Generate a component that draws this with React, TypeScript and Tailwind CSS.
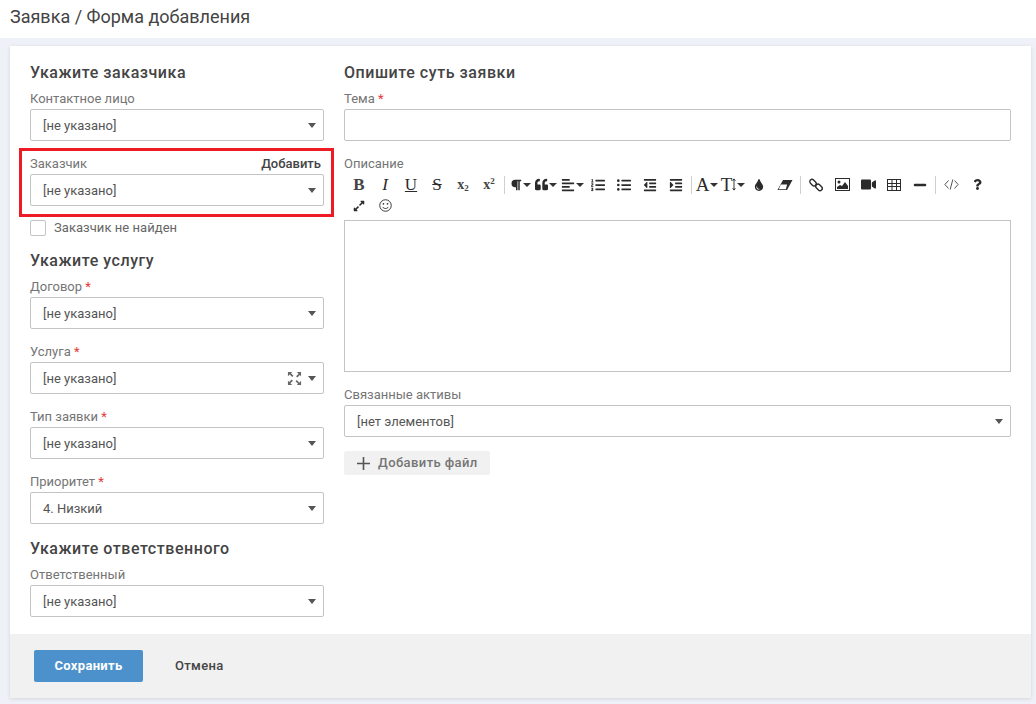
import React from "react";
import { FaParagraph, FaQuoteLeft, FaAlignLeft, FaListOl, FaListUl, FaOutdent, FaIndent, FaTint, FaVideo, FaMinus, FaQuestion, FaExpandAlt } from "react-icons/fa";

const Caret = () => <span className="ml-px inline-block h-0 w-0 shrink-0 border-x-[4px] border-t-[4px] border-x-transparent border-t-[#333]" />;

const Select = ({ value, extra, noCaret }: { value: string; extra?: React.ReactNode; noCaret?: boolean }) => (
  <div className="flex h-[32px] items-center rounded-[2px] border border-[#c4c4c4] bg-white pl-[12px] pr-[7px] text-[13px] text-[#555]">
    <span className="flex-1 pt-[2px]">{value}</span>
    {extra}
    {!noCaret && <span className="h-0 w-0 border-x-[4.5px] border-t-[5px] border-x-transparent border-t-[#555]" />}
  </div>
);

const Field = ({ label, req, value, extra, right, noCaret, className = "" }: { label: string; req?: boolean; value: string; extra?: React.ReactNode; right?: React.ReactNode; noCaret?: boolean; className?: string }) => (
  <div className={className}>
    <div className="flex h-[20px] items-center justify-between text-[13px] text-[#757575]">
      <span>{label}{req && <span className="text-[#e53935]"> *</span>}</span>
      {right}
    </div>
    <Select value={value} extra={extra} noCaret={noCaret} />
  </div>
);

const Heading = ({ children, className = "" }: { children: React.ReactNode; className?: string }) => (
  <div className={`text-[16px] font-medium leading-[20px] tracking-[0.55px] text-[#444] ${className}`}>{children}</div>
);

const Btn = ({ children }: { children: React.ReactNode }) => (
  <span className="flex h-[21px] w-[26px] shrink-0 items-center justify-center text-[#2b2b2b]">{children}</span>
);
const Sep = () => (
  <span className="flex h-[21px] w-[5px] shrink-0 items-center pl-[2px]">
    <span className="h-[18px] w-px bg-[#cfcfcf]" />
  </span>
);
const serif = "[font-family:'Liberation_Serif',serif] text-[17px] leading-none";

export default function App() {
  return (
    <div className="flex h-[704px] w-[1036px] flex-col overflow-hidden bg-[#eef2f8] [font-family:Roboto,sans-serif]">
      <div className="flex h-[38px] shrink-0 items-center bg-white pb-[6px] pl-[10px] text-[18px] text-[#444]">Заявка / Форма добавления</div>
      <div className="mt-[8px] ml-[10px] mr-[5px] flex h-[652px] flex-col bg-white shadow-[0_1px_4px_rgba(0,0,0,0.12)]">
        <div className="flex flex-1 gap-[20px] px-[20px] pt-[17px]">
          <div className="flex w-[294px] shrink-0 flex-col">
            <Heading>Укажите заказчика</Heading>
            <Field className="mt-[6px]" label="Контактное лицо" value="[не указано]" />
            <div className="relative mt-[13px]">
              <Field label="Заказчик" value="[не указано]" right={<span className="pr-[3px] text-[13px] font-medium text-[#444]">Добавить</span>} />
              <div className="absolute -top-[6px] -right-[10px] -bottom-[11px] -left-[11px] border-[3px] border-[#ed1c24]" />
            </div>
            <label className="mt-[14px] flex h-[16px] items-center gap-[8px] text-[13px] text-[#666]">
              <span className="h-[16px] w-[16px] rounded-[2px] border border-[#c4c4c4] bg-white" />
              <span className="tracking-[0.05px]">Заказчик не найден</span>
            </label>
            <Heading className="mt-[15px]">Укажите услугу</Heading>
            <Field className="mt-[6px]" label="Договор" req value="[не указано]" />
            <Field className="mt-[13px]" label="Услуга" req value="[не указано]" extra={
              <svg viewBox="0 0 16 16" className="mr-[6px] h-[15px] w-[15px] text-[#666]" fill="currentColor">
                <path d="M1 1h4.5L4.2 2.3 6.9 5 5.6 6.3 2.9 3.6 1 5.5zM15 1v4.5l-1.3-1.3L11 6.9 9.7 5.6l2.7-2.7L10.5 1zM1 15v-4.5l1.3 1.3L5 9.1l1.3 1.3-2.7 2.7 1.9 1.9zM15 15h-4.5l1.3-1.3L9.1 11l1.3-1.3 2.7 2.7 1.9-1.9z" />
              </svg>
            } />
            <Field className="mt-[13px]" label="Тип заявки" req value="[не указано]" />
            <Field className="mt-[13px]" label="Приоритет" req value="4. Низкий" />
            <Heading className="mt-[14px] pt-px">Укажите ответственного</Heading>
            <Field className="mt-[6px]" label="Ответственный" value="[не указано]" />
          </div>
          <div className="flex w-[667px] min-w-0 shrink-0 flex-col">
            <Heading>Опишите суть заявки</Heading>
            <Field className="mt-[6px]" label="Тема" req value="" noCaret />
            <div className="mt-[13px] flex h-[20px] items-center text-[13px] text-[#757575]">Описание</div>
            <div className="flex flex-wrap items-center pl-[2px]">
              <Btn><span className={`${serif} font-bold text-[#444]`}>B</span></Btn>
              <Btn><span className={`${serif} italic`}>I</span></Btn>
              <Btn><span className={`${serif} underline`}>U</span></Btn>
              <Btn><span className={`${serif} line-through`}>S</span></Btn>
              <Btn><span className="[font-family:'Liberation_Serif',serif] text-[14px] font-bold leading-none text-[#444]">x<sub className="text-[9px]">2</sub></span></Btn>
              <Btn><span className="[font-family:'Liberation_Serif',serif] text-[14px] font-bold leading-none text-[#444]">x<sup className="text-[9px]">2</sup></span></Btn>
              <Sep />
              <Btn><FaParagraph size={12} /><Caret /></Btn>
              <Btn><FaQuoteLeft size={13} /><Caret /></Btn>
              <Btn><FaAlignLeft size={14} /><Caret /></Btn>
              <Btn><FaListOl size={14} /></Btn>
              <Btn><FaListUl size={14} /></Btn>
              <Btn><FaOutdent size={14} /></Btn>
              <Btn><FaIndent size={14} /></Btn>
              <Sep />
              <Btn><span className="[font-family:'Liberation_Serif',serif] text-[19px] leading-none">A</span><Caret /></Btn>
              <Btn>
                <span className="[font-family:'Liberation_Serif',serif] text-[19px] leading-none">T</span>
                <svg viewBox="0 0 4 14" className="h-[13px] w-[4px]" fill="none" stroke="currentColor" strokeWidth="1"><path d="M2 1v12M.5 3 2 1l1.5 2M.5 11 2 13l1.5-2" /></svg>
                <Caret />
              </Btn>
              <Btn><FaTint size={12} /></Btn>
              <Btn>
                <svg viewBox="0 0 16 12" className="h-[12px] w-[16px]">
                  <path d="M6 1h9.5L10 11H.5z" fill="#2b2b2b" />
                  <path d="M3.8 5.5h6.3L8.9 10.2H1.7z" fill="#fff" />
                </svg>
              </Btn>
              <Sep />
              <Btn>
                <svg viewBox="0 0 14 14" className="h-[14px] w-[14px]" fill="none" stroke="currentColor" strokeWidth="1.4">
                  <rect x="0.4" y="2.4" width="7.2" height="4.4" rx="2.2" transform="rotate(45 4 4.6)" />
                  <rect x="6.4" y="7.2" width="7.2" height="4.4" rx="2.2" transform="rotate(45 10 9.4)" />
                </svg>
              </Btn>
              <Btn>
                <svg viewBox="0 0 15 13" className="h-[13px] w-[15px]">
                  <rect x="0.5" y="0.5" width="14" height="12" fill="none" stroke="currentColor" />
                  <circle cx="4" cy="4" r="1.5" fill="currentColor" />
                  <path d="M2 11V9l3-2 2 1 3-4 3 4v3z" fill="currentColor" />
                </svg>
              </Btn>
              <Btn><FaVideo size={15} /></Btn>
              <Btn>
                <svg viewBox="0 0 14 12" className="h-[12px] w-[14px]" fill="none" stroke="currentColor">
                  <rect x="0.5" y="0.5" width="13" height="11" />
                  <path d="M0 4.5h14M0 7.5h14M5 1v10M9.5 1v10" />
                </svg>
              </Btn>
              <Btn><FaMinus size={14} /></Btn>
              <Sep />
              <Btn>
                <svg viewBox="0 0 15 11" className="h-[11px] w-[15px]" fill="none" stroke="#555" strokeWidth="1">
                  <path d="M4.5 1.5.9 5.5l3.6 4M10.5 1.5l3.6 4-3.6 4M8.8.5 6.2 10.5" />
                </svg>
              </Btn>
              <Btn><FaQuestion size={11} /></Btn>
              <div className="w-full" />
              <Btn><FaExpandAlt size={12} /></Btn>
              <Btn>
                <svg viewBox="0 0 14 14" className="h-[13px] w-[13px]" fill="none" stroke="currentColor" strokeWidth="1">
                  <circle cx="7" cy="7" r="6.2" />
                  <circle cx="4.8" cy="5.2" r="0.9" fill="currentColor" stroke="none" />
                  <circle cx="9.2" cy="5.2" r="0.9" fill="currentColor" stroke="none" />
                  <path d="M3.8 8.5c1.5 2.3 4.9 2.3 6.4 0" />
                </svg>
              </Btn>
            </div>
            <div className="mt-[4px] h-[152px] border border-[#c4c4c4] bg-white" />
            <Field className="mt-[13px]" label="Связанные активы" value="[нет элементов]" />
            <div className="mt-[14px] flex h-[24px] w-[146px] items-center gap-[8px] rounded-[2px] bg-[#f1f1f1] pl-[13px] text-[13px] font-medium tracking-[0.4px] text-[#757575]">
              <svg viewBox="0 0 13 13" className="h-[13px] w-[13px]" fill="none" stroke="#555" strokeWidth="1.6"><path d="M6.5 0v13M0 6.5h13" /></svg>
              Добавить файл
            </div>
          </div>
        </div>
        <div className="flex h-[64px] shrink-0 items-center bg-[#f1f1f1] pl-[24px]">
          <div className="flex h-[32px] w-[109px] items-center justify-center rounded-[2px] bg-[#4d91cc] text-[13px] font-bold tracking-[0.3px] text-white">Сохранить</div>
          <div className="ml-[32px] text-[13px] font-medium tracking-[0.35px] text-[#444]">Отмена</div>
        </div>
      </div>
    </div>
  );
}
